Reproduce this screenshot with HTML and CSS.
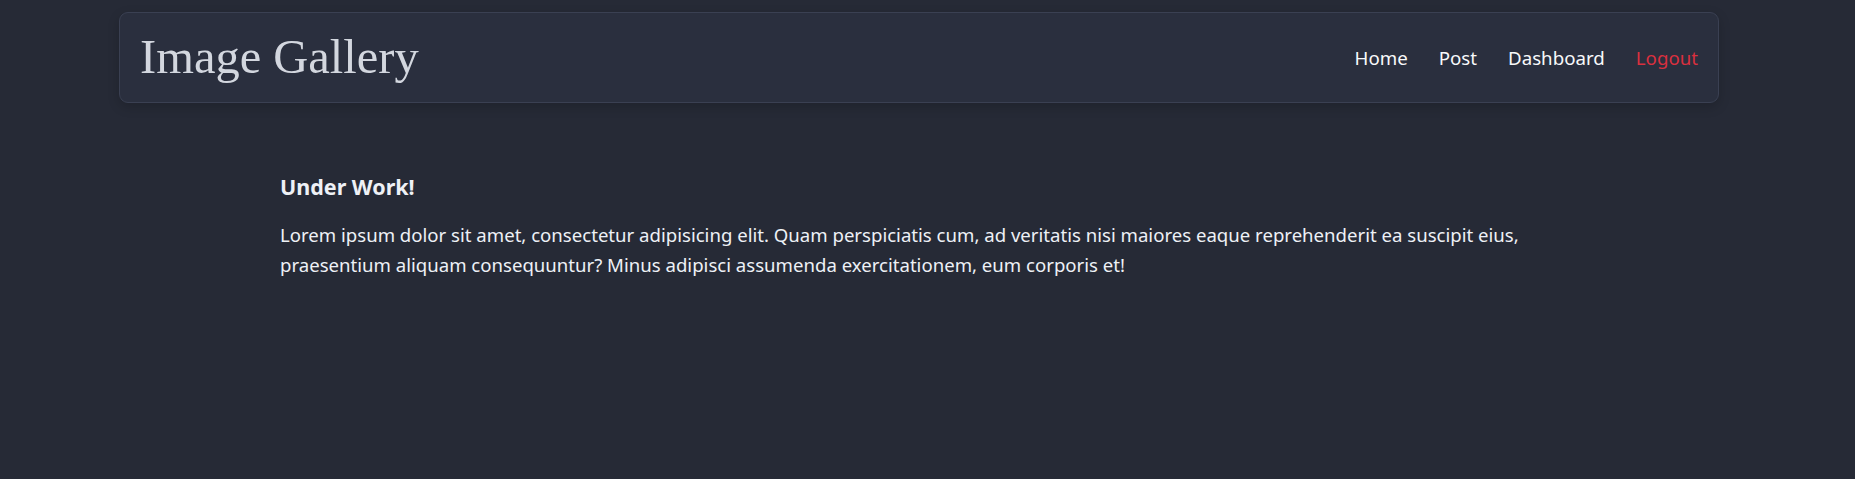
FILE: index.html
```html
<!DOCTYPE html>
<html lang="en">
<head>
<meta charset="utf-8">
<title>Image Gallery</title>
<link rel="stylesheet" href="styles.css">
</head>
<body>
<nav class="navbar">
  <a class="brand" href="#">Image Gallery</a>
  <ul class="nav-links">
    <li><a href="#">Home</a></li>
    <li><a href="#">Post</a></li>
    <li><a href="#">Dashboard</a></li>
    <li><a class="logout" href="#">Logout</a></li>
  </ul>
</nav>
<main class="container">
  <h4 class="title">Under Work!</h4>
  <p class="text">Lorem ipsum dolor sit amet, consectetur adipisicing elit. Quam perspiciatis cum, ad veritatis nisi maiores eaque reprehenderit ea suscipit eius, praesentium aliquam consequuntur? Minus adipisci assumenda exercitationem, eum corporis et!</p>
</main>
</body>
</html>
```
FILE: styles.css
```css
* { box-sizing: border-box; }
html, body {
  margin: 0;
  padding: 0;
  background: #262a36;
  color: #f3f5f8;
  font-family: "Noto Sans", "Open Sans", sans-serif;
}
body { padding-top: 12px; min-height: 479px; }
.navbar {
  margin-left: 119px;
  width: 1600px;
  height: 91px;
  display: flex;
  align-items: center;
  justify-content: space-between;
  padding: 0 20px 0 20px;
  background: #2a2f3e;
  border: 1px solid #3a4052;
  border-radius: 9px;
  box-shadow: 0 4px 12px rgba(0,0,0,0.18);
}
.brand {
  font-family: "Liberation Serif", serif;
  font-size: 48.5px;
  color: #d3d7df;
  text-decoration: none;
  line-height: 1;
}
.nav-links {
  list-style: none;
  display: flex;
  gap: 31px;
  margin: 0;
  padding: 0;
}
.nav-links a {
  color: #f8f9fa;
  text-decoration: none;
  font-size: 18.7px;
}
.nav-links a.logout { color: #d9303e; }
.container {
  width: 1296px;
  margin: 0 0 0 280px;
  padding-top: 69px;
}
.title {
  margin: 0 0 19px 0;
  font-size: 21.5px;
  font-weight: 700;
  color: #eef1f6;
}
.text {
  margin: 0;
  font-size: 18.6px;
  line-height: 29.6px;
  color: #eef1f6;
}
```
